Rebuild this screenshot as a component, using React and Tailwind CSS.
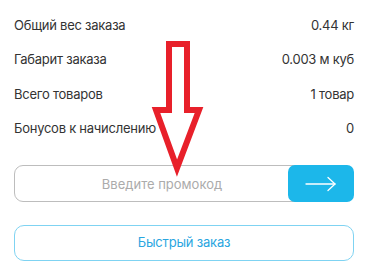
import React from 'react';

const rows = [
  { label: 'Общий вес заказа', value: '0.44 кг' },
  { label: 'Габарит заказа', value: '0.003 м куб' },
  { label: 'Всего товаров', value: '1 товар' },
  { label: 'Бонусов к начислению', value: '0' },
];

export default function App() {
  return (
    <div className="relative w-[370px] h-[280px] bg-white overflow-hidden font-['Inter','Noto_Sans',sans-serif]">
      <div className="pl-[14px] pr-[16px] pt-[8px]">
        {/* Order summary */}
        <div className="flex flex-col">
          {rows.map((r) => (
            <div key={r.label} className="h-[34.5px] flex items-center justify-between text-[13px] text-[#333] tracking-[-0.25px]">
              <span>{r.label}</span>
              <span>{r.value}</span>
            </div>
          ))}
        </div>

        {/* Promo code */}
        <div className="mt-[19px] flex h-[37px]">
          <input
            placeholder="Введите промокод"
            className="flex-1 min-w-0 -mr-[22px] h-full rounded-[9px] border border-[#bdbdbd] text-center text-[13px] text-[#333] placeholder:text-[#ababab] outline-none"
          />
          <button className="relative w-[66px] h-full rounded-[7px] bg-[#1cb7ea] flex items-center justify-center">
            <svg width="32" height="16" viewBox="0 0 32 16" fill="none" stroke="white" strokeWidth="1.3" strokeLinecap="round" strokeLinejoin="round">
              <path d="M1 8h29" />
              <path d="M23 1.5l7 6.5-7 6.5" />
            </svg>
          </button>
        </div>

        {/* Quick order */}
        <button className="mt-[23px] w-full h-[36px] rounded-[10px] border border-[#7fd3f2] text-[13px] text-[#2aa6df] tracking-[-0.2px]">
          Быстрый заказ
        </button>
      </div>

      {/* Red annotation arrow */}
      <svg className="absolute left-0 top-0 pointer-events-none" width="370" height="280" viewBox="0 0 370 280">
        <polygon
          points="169,44 187,44 187,110 199,110 177,168 156,110 169,110"
          fill="white"
          stroke="#e8202a"
          strokeWidth="6"
          strokeLinejoin="miter"
        />
      </svg>
    </div>
  );
}
